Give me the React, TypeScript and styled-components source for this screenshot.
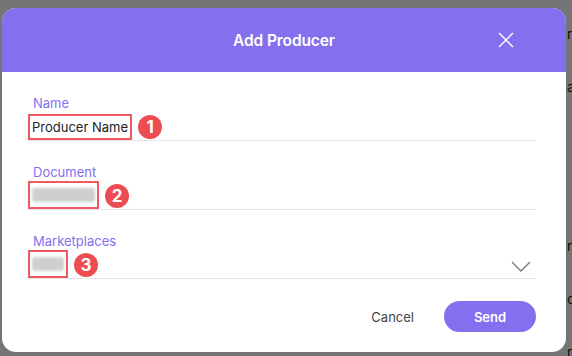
import React from "react";
import styled, { createGlobalStyle } from "styled-components";

const Global = createGlobalStyle`
  html, body { margin: 0; padding: 0; }
  body { font-family: Inter, "Noto Sans", sans-serif; background: #fff; }
  * { box-sizing: border-box; }
`;

const Stage = styled.div`
  position: relative;
  width: 572px;
  height: 356px;
  overflow: hidden;
  background: #ffffff;
`;

const BackList = styled.div`
  display: flex;
  flex-direction: column;
  padding: 7px 0 0 567px;
`;

const BackRow = styled.div`
  height: 53px;
  display: flex;
  align-items: center;
  font-size: 14px;
  color: #222;
  white-space: nowrap;
`;

const Overlay = styled.div`
  position: absolute;
  inset: 0;
  background: rgba(0, 0, 0, 0.54);
`;

const Modal = styled.div`
  position: absolute;
  left: 2px;
  top: 8px;
  width: 564px;
  height: 344px;
  background: #fff;
  border-radius: 14px;
  overflow: hidden;
  display: flex;
  flex-direction: column;
`;

const Header = styled.div`
  height: 64px;
  background: #8470ef;
  display: flex;
  align-items: center;
  justify-content: center;
  position: relative;
`;

const Title = styled.h2`
  margin: 0;
  color: #fff;
  font-size: 15.5px;
  font-weight: 600;
  letter-spacing: -0.1px;
`;

const CloseBtn = styled.button`
  position: absolute;
  right: 52px;
  top: 24px;
  width: 16px;
  height: 16px;
  padding: 0;
  border: 0;
  background: transparent;
  display: flex;
`;

const Body = styled.div`
  display: flex;
  flex-direction: column;
  padding: 0 30px 0 26px;
`;

const Field = styled.div`
  display: flex;
  flex-direction: column;
  padding-top: 23px;
`;

const Label = styled.div`
  font-size: 13px;
  line-height: 16px;
  color: #8470ef;
  padding-left: 5px;
`;

const Row = styled.div`
  height: 30px;
  border-bottom: 1px solid #e6e6e6;
  display: flex;
  align-items: flex-end;
  position: relative;
`;

const Marked = styled.div<{ $h: number }>`
  height: ${(p) => p.$h}px;
  border: 2px solid #ec5a60;
  display: flex;
  align-items: center;
  padding: 0 2px;
  font-size: 13px;
  color: #222;
`;

const Blur = styled.span<{ $w: number }>`
  display: inline-block;
  width: ${(p) => p.$w}px;
  height: 14px;
  background: #cfcfcf;
  filter: blur(1.5px);
  border-radius: 2px;
`;

const Badge = styled.div`
  width: 24px;
  height: 24px;
  border-radius: 50%;
  background: #ec4d52;
  color: #fff;
  font-weight: 700;
  font-size: 17px;
  display: flex;
  align-items: center;
  justify-content: center;
  margin: 0 0 0 6px;
  align-self: center;
  position: relative;
  top: 1px;
`;

const Chevron = styled.svg`
  position: absolute;
  right: 5px;
  top: 12px;
`;

const Footer = styled.div`
  display: flex;
  justify-content: flex-end;
  align-items: center;
  gap: 30px;
  padding: 22px 30px 0 0;
`;

const Cancel = styled.button`
  border: 0;
  background: transparent;
  font-family: inherit;
  font-size: 13px;
  color: #444;
  padding: 0;
`;

const Send = styled.button`
  width: 92px;
  height: 31px;
  border: 0;
  border-radius: 16px;
  background: #8470ef;
  color: #fff;
  font-family: inherit;
  font-size: 13px;
  font-weight: 600;
`;

export default function App() {
  return (
    <Stage>
      <Global />
      <BackList>
        {["nie", "a", "", "", "n", "c", "ne"].map((t, i) => (
          <BackRow key={i}>{t}</BackRow>
        ))}
      </BackList>
      <Overlay />
      <Modal>
        <Header>
          <Title>Add Producer</Title>
          <CloseBtn aria-label="Close">
            <svg width="16" height="16" viewBox="0 0 16 16">
              <path d="M1 1L15 15M15 1L1 15" stroke="#fff" strokeWidth="1.4" fill="none" />
            </svg>
          </CloseBtn>
        </Header>
        <Body>
          <Field>
            <Label>Name</Label>
            <Row>
              <Marked $h={26}>Producer Name</Marked>
              <Badge>1</Badge>
            </Row>
          </Field>
          <Field>
            <Label>Document</Label>
            <Row>
              <Marked $h={28}>
                <Blur $w={63} />
              </Marked>
              <Badge>2</Badge>
            </Row>
          </Field>
          <Field>
            <Label>Marketplaces</Label>
            <Row>
              <Marked $h={28}>
                <Blur $w={32} />
              </Marked>
              <Badge>3</Badge>
              <Chevron width="20" height="11" viewBox="0 0 20 11">
                <path d="M1 1L10 10L19 1" stroke="#777" strokeWidth="1.3" fill="none" />
              </Chevron>
            </Row>
          </Field>
        </Body>
        <Footer>
          <Cancel>Cancel</Cancel>
          <Send>Send</Send>
        </Footer>
      </Modal>
    </Stage>
  );
}
